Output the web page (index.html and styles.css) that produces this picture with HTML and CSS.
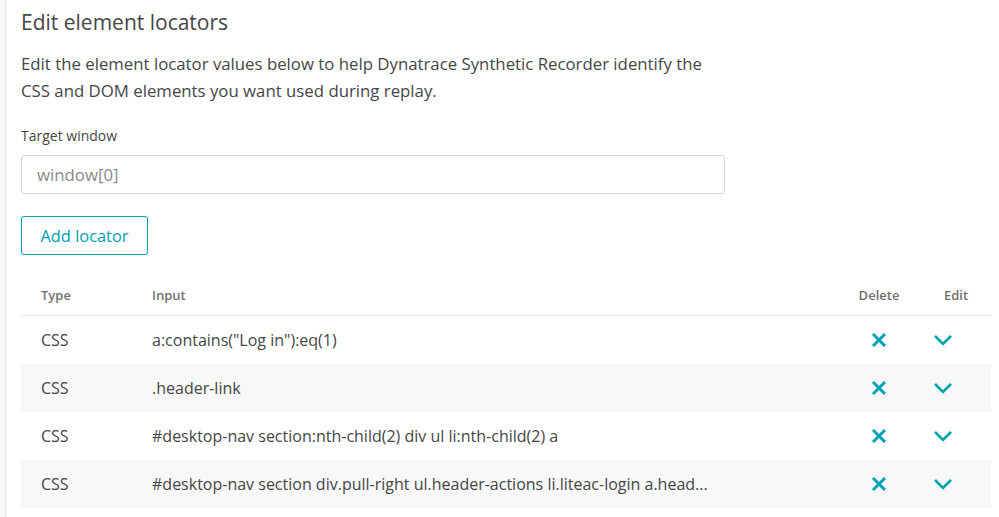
FILE: index.html
```html
<!DOCTYPE html>
<html>
<head>
<meta charset="utf-8">
<link rel="stylesheet" href="styles.css">
</head>
<body>
<div class="frame">
  <div class="panel">
    <h1 class="title">Edit element locators</h1>
    <p class="desc">Edit the element locator values below to help Dynatrace Synthetic Recorder identify the<br>CSS and DOM elements you want used during replay.</p>
    <label class="label">Target window</label>
    <div class="input">window[0]</div>
    <button class="btn">Add locator</button>
    <div class="table">
      <div class="row head">
        <div class="c-type">Type</div>
        <div class="c-input">Input</div>
        <div class="c-del">Delete</div>
        <div class="c-edit">Edit</div>
      </div>
      <div class="row">
        <div class="c-type">CSS</div>
        <div class="c-input">a:contains("Log in"):eq(1)</div>
        <div class="c-del"><svg class="ico-x" viewBox="0 0 16 16"><path d="M2 2L14 14M14 2L2 14"/></svg></div>
        <div class="c-edit"><svg class="ico-chev" viewBox="0 0 20 12"><path d="M2 2L10 10L18 2"/></svg></div>
      </div>
      <div class="row alt">
        <div class="c-type">CSS</div>
        <div class="c-input">.header-link</div>
        <div class="c-del"><svg class="ico-x" viewBox="0 0 16 16"><path d="M2 2L14 14M14 2L2 14"/></svg></div>
        <div class="c-edit"><svg class="ico-chev" viewBox="0 0 20 12"><path d="M2 2L10 10L18 2"/></svg></div>
      </div>
      <div class="row">
        <div class="c-type">CSS</div>
        <div class="c-input">#desktop-nav section:nth-child(2) div ul li:nth-child(2) a</div>
        <div class="c-del"><svg class="ico-x" viewBox="0 0 16 16"><path d="M2 2L14 14M14 2L2 14"/></svg></div>
        <div class="c-edit"><svg class="ico-chev" viewBox="0 0 20 12"><path d="M2 2L10 10L18 2"/></svg></div>
      </div>
      <div class="row alt">
        <div class="c-type">CSS</div>
        <div class="c-input">#desktop-nav section div.pull-right ul.header-actions li.liteac-login a.head...</div>
        <div class="c-del"><svg class="ico-x" viewBox="0 0 16 16"><path d="M2 2L14 14M14 2L2 14"/></svg></div>
        <div class="c-edit"><svg class="ico-chev" viewBox="0 0 20 12"><path d="M2 2L10 10L18 2"/></svg></div>
      </div>
    </div>
  </div>
</div>
</body>
</html>
```

FILE: styles.css
```css
html, body {
  margin: 0;
  padding: 0;
  background: #fff;
}
body {
  font-family: "Open Sans", "Noto Sans", sans-serif;
  color: #454646;
  width: 999px;
  height: 517px;
  overflow: hidden;
}
.frame {
  height: 517px;
  background: #f7f7f7;
  padding-left: 5px;
}
.panel {
  height: 517px;
  background: #fff;
  border-left: 1px solid #e6e6e6;
  padding-left: 15px;
  padding-right: 8px;
}
.title {
  margin: 0;
  padding-top: 8px;
  font-size: 21px;
  font-weight: 400;
  line-height: 29px;
  color: #454646;
}
.desc {
  margin: 13px 0 0;
  font-size: 16.8px;
  line-height: 27px;
  color: #454646;
}
.label {
  display: block;
  margin-top: 22px;
  font-size: 14px;
  line-height: 20px;
  color: #454646;
}
.input {
  margin-top: 9px;
  width: 704px;
  height: 39px;
  box-sizing: border-box;
  border: 1px solid #d4d4d4;
  border-radius: 3px;
  padding-left: 15px;
  font-size: 16.8px;
  line-height: 37px;
  color: #898989;
}
.btn {
  display: block;
  margin-top: 22px;
  height: 39px;
  width: 127px;
  box-sizing: border-box;
  border: 1px solid #00a1b2;
  border-radius: 3px;
  background: #fff;
  color: #00a1b2;
  font-family: inherit;
  font-size: 16.4px;
  padding: 0;
}
.table {
  margin-top: 20px;
  width: 970px;
}
.row {
  display: flex;
  align-items: center;
  height: 48px;
  font-size: 16px;
}
.row.alt {
  background: #f8f8f8;
}
.row.head {
  height: 41px;
  font-size: 13px;
  font-weight: 600;
  color: #707070;
  border-bottom: 1px solid #e6e6e6;
  box-sizing: border-box;
}
.c-type {
  width: 131px;
  padding-left: 20px;
  box-sizing: border-box;
}
.c-input {
  flex: 1;
  white-space: nowrap;
}
.c-del {
  width: 100px;
  display: flex;
  justify-content: center;
}
.c-edit {
  width: 62px;
  padding-left: 4px;
  box-sizing: border-box;
}
.head .c-edit {
  padding-left: 15px;
}
.ico-x {
  width: 16px;
  height: 16px;
  fill: none;
  stroke: #00a1b2;
  stroke-width: 3;
  display: block;
}
.ico-chev {
  width: 20px;
  height: 12px;
  fill: none;
  stroke: #00a1b2;
  stroke-width: 2.6;
  display: block;
}
```
